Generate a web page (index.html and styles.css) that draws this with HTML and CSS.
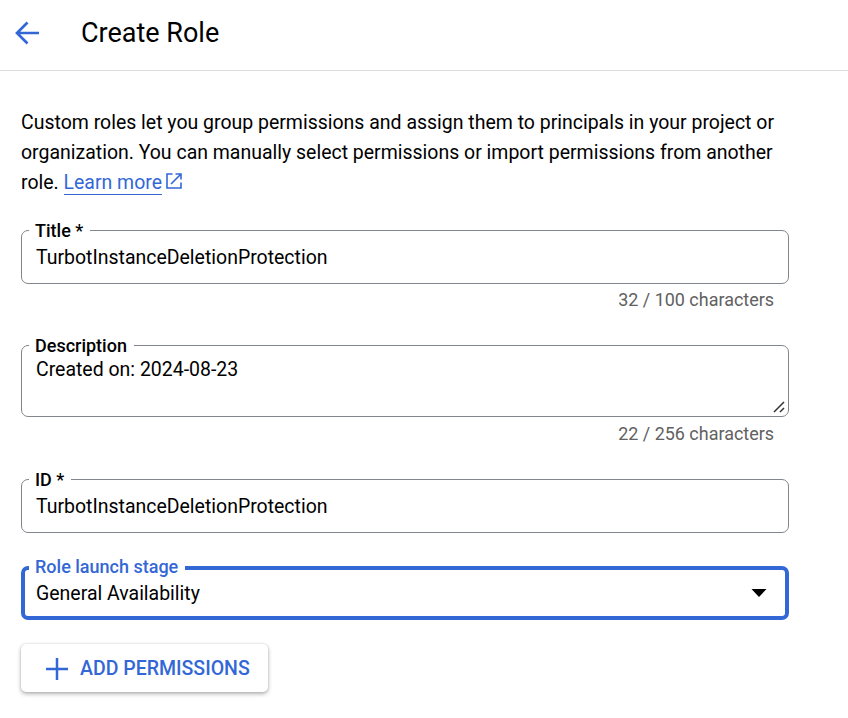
FILE: index.html
```html
<!DOCTYPE html>
<html lang="en">
<head>
<meta charset="utf-8">
<title>Create Role</title>
<link rel="stylesheet" href="styles.css">
</head>
<body>
<header class="topbar">
  <svg class="back" width="26" height="26" viewBox="0 0 26 26"><path d="M25 13H3M13.5 2.5 3 13l10.500 10.500" /></svg>
  <h1>Create Role</h1>
</header>
<main>
  <p class="intro">Custom roles let you group permissions and assign them to principals in your project or<br>organization. You can manually select permissions or import permissions from another<br>role. <a>Learn more</a><svg class="ext" width="16" height="16" viewBox="0 0 16 16"><path d="M6.500 1H1v14h14V9.500M9.500 1H15v5.500M15 1 5 11" /></svg></p>
  <fieldset class="field title"><legend>Title *</legend><div class="value">TurbotInstanceDeletionProtection</div></fieldset>
  <div class="count">32 / 100 characters</div>
  <fieldset class="field desc"><legend>Description</legend><div class="value">Created on: 2024-08-23</div>
    <svg class="grip" width="12" height="12" viewBox="0 0 12 12"><path d="M1 11 11 1M7 11l4-4" /></svg></fieldset>
  <div class="count desc-count">22 / 256 characters</div>
  <fieldset class="field id"><legend>ID *</legend><div class="value">TurbotInstanceDeletionProtection</div></fieldset>
  <fieldset class="field stage"><legend>Role launch stage</legend><div class="value">General Availability<svg width="16" height="8" viewBox="0 0 16 8"><path d="M0.500 0h15L8 8z" /></svg></div></fieldset>
  <button class="add"><svg width="22" height="22" viewBox="0 0 22 22"><path d="M11 0v22M0 11h22" /></svg><span>ADD PERMISSIONS</span></button>
</main>
</body>
</html>
```
FILE: styles.css
```css
* { box-sizing: border-box; }
body { margin: 0; width: 848px; height: 718px; overflow: hidden; background: #fff; color: #000; font-family: Roboto, sans-serif; font-size: 19.480px; }
svg { display: block; fill: none; stroke: #3367d6; flex: none; }
.topbar { height: 71px; border-bottom: 1px solid #dadce0; display: flex; align-items: flex-start; padding: 16px 0 0 14px; }
.back { margin-top: 4px; stroke-width: 2.7; }
h1 { margin: 1px 0 0 41px; font-size: 27px; line-height: 33px; font-weight: 400; }
main { padding: 37px 59px 0 21px; }
.intro { margin: 0; height: 89px; line-height: 30px; white-space: nowrap; }
.intro a { color: #3367d6; border-bottom: 1px solid #3367d6; }
.ext { display: inline-block; margin-left: 4px; stroke-width: 1.6; vertical-align: 0; }
.field { position: relative; margin: 0; min-width: 0; padding: 0 14px; border: 1px solid #80868b; border-radius: 7px; }
legend { height: 21px; margin-left: -7px; padding: 0 7px 0 6px; font-size: 18px; line-height: 22px; font-weight: 500; }
.value { line-height: 24px; }
.title { margin-top: 23px; height: 64px; }
.title .value, .id .value { padding-top: 5px; }
.count { height: 24px; margin-top: 4px; padding-right: 15px; text-align: right; color: #616161; font-size: 17.950px; line-height: 24px; }
.desc { margin-top: 23px; height: 82px; }
.desc .value { padding-top: 2px; }
.desc-count { margin-top: 5px; }
.grip { position: absolute; right: 3px; bottom: 3px; stroke: #333; stroke-width: 1.5; }
.id { margin-top: 23px; height: 64px; }
.stage { margin-top: 23px; height: 64px; border: 4px solid #3367d6; padding: 0 11px; }
.stage legend { height: 24px; color: #3367d6; }
.stage .value { display: flex; align-items: center; justify-content: space-between; padding: 2px 7px 0 0; }
.stage svg { margin-top: -2px; fill: #000; stroke: none; }
.add { margin: 24px 0 0; width: 247px; height: 48px; padding: 1px 0 0 25px; display: flex; align-items: center; gap: 12px; border: 0; border-radius: 5px; background: #fff; box-shadow: 0 2px 4px rgba(0,0,0,.3), 0 0 2px rgba(0,0,0,.15); color: #3367d6; font: 500 19.500px Roboto, sans-serif; white-space: nowrap; }
.add svg { stroke-width: 2.5; }
```
